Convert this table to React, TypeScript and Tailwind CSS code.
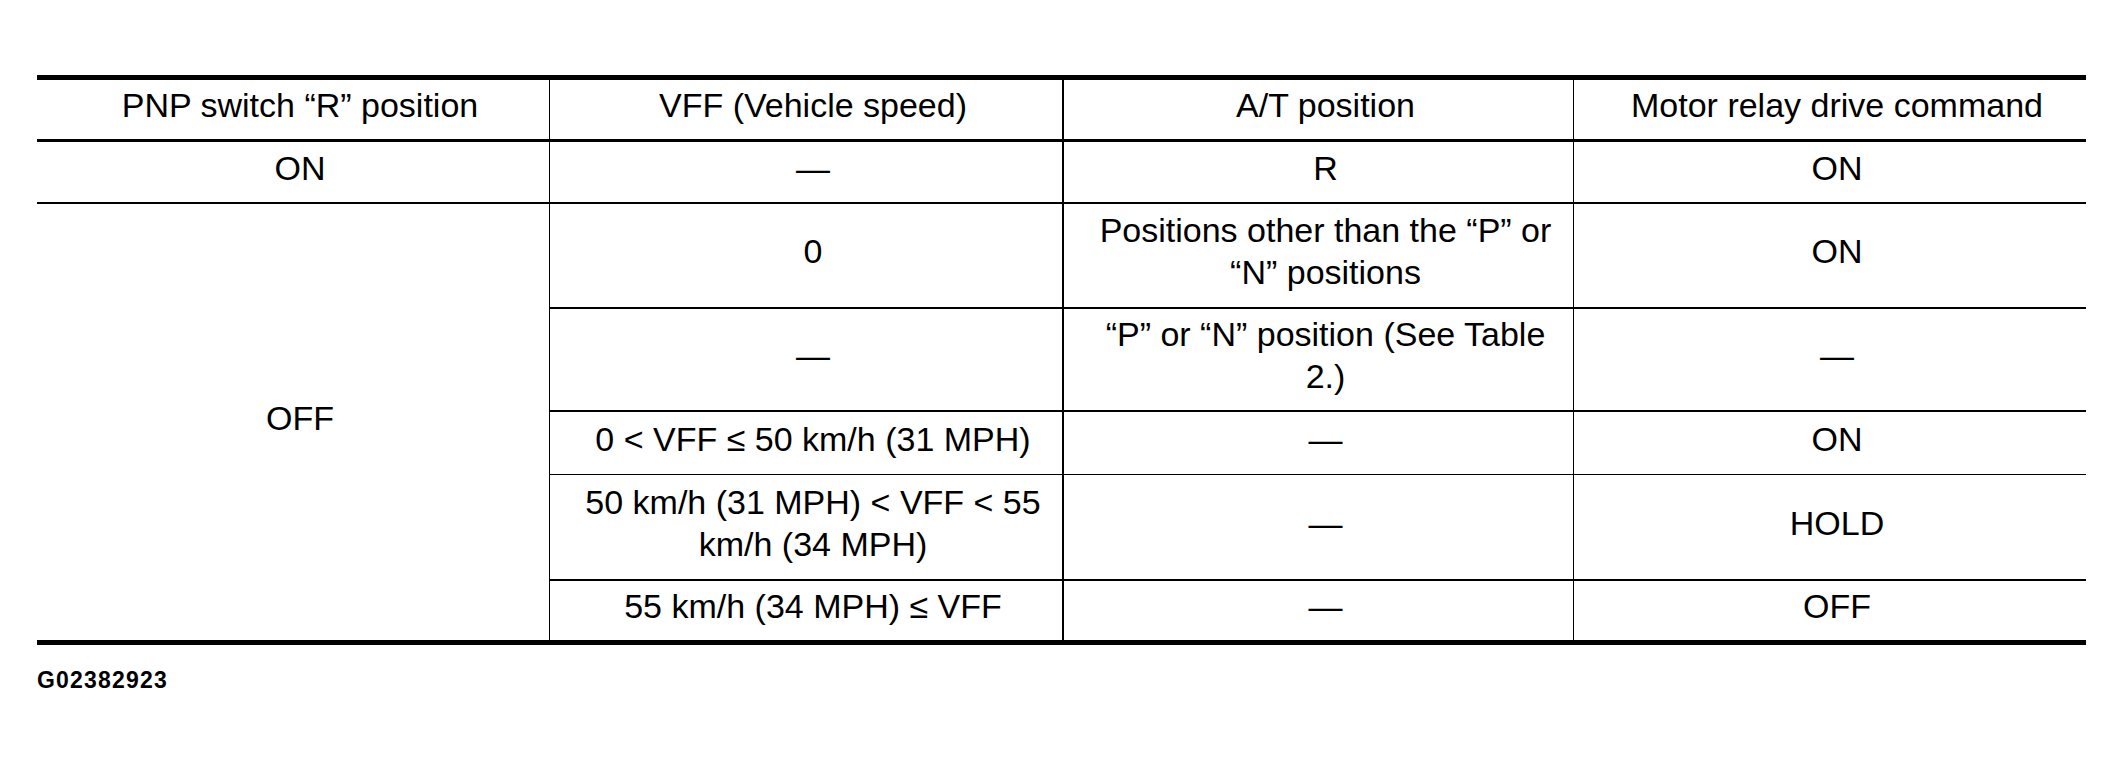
import React from 'react'

const font = { fontFamily: '"Liberation Sans", Arial, sans-serif' }

type CellProps = {
  children?: React.ReactNode
  className?: string
}

function Cell({ children, className = '' }: CellProps) {
  return (
    <div className={`flex items-center justify-center text-center pl-[31px] pr-[17px] pb-[9px] leading-[42px] ${className}`}>
      <div>{children}</div>
    </div>
  )
}

export default function App() {
  return (
    <div className="w-[2124px] h-[764px] bg-white text-black pt-[75px] pl-[37px]" style={font}>
      <div className="w-[2049px] border-t-[5px] border-b-[5px] border-black text-[34px]">
        <div className="grid grid-cols-[512px_513px_511px_513px]">
          {/* header */}
          <Cell className="h-[62px] border-b-[3px] border-black">PNP switch “R” position</Cell>
          <Cell className="h-[62px] border-b-[3px] border-l border-black">VFF (Vehicle speed)</Cell>
          <Cell className="h-[62px] border-b-[3px] border-l-2 border-black">A/T position</Cell>
          <Cell className="h-[62px] border-b-[3px] border-l border-black">Motor relay drive command</Cell>

          {/* PNP ON */}
          <Cell className="h-[62px] border-b-2 border-black">ON</Cell>
          <Cell className="h-[62px] border-b-2 border-l border-black">—</Cell>
          <Cell className="h-[62px] border-b-2 border-l-2 border-black">R</Cell>
          <Cell className="h-[62px] border-b-2 border-l border-black">ON</Cell>

          {/* PNP OFF */}
          <Cell className="row-span-5 border-black">OFF</Cell>
          <Cell className="h-[105px] border-b-2 border-l border-black">0</Cell>
          <Cell className="h-[105px] border-b-2 border-l-2 border-black">
            Positions other than the “P” or “N” positions
          </Cell>
          <Cell className="h-[105px] border-b-2 border-l border-black">ON</Cell>

          <Cell className="h-[103px] border-b-2 border-l border-black">—</Cell>
          <Cell className="h-[103px] border-b-2 border-l-2 border-black">
            “P” or “N” position (See Table 2.)
          </Cell>
          <Cell className="h-[103px] border-b-2 border-l border-black">—</Cell>

          <Cell className="h-[63px] border-b border-l border-black">0 &lt; VFF ≤ 50 km/h (31 MPH)</Cell>
          <Cell className="h-[63px] border-b border-l-2 border-black">—</Cell>
          <Cell className="h-[63px] border-b border-l border-black">ON</Cell>

          <Cell className="h-[106px] border-b-2 border-l border-black">
            50 km/h (31 MPH) &lt; VFF &lt; 55 km/h (34 MPH)
          </Cell>
          <Cell className="h-[106px] border-b-2 border-l-2 border-black">—</Cell>
          <Cell className="h-[106px] border-b-2 border-l border-black">HOLD</Cell>

          <Cell className="h-[59px] border-l border-black">55 km/h (34 MPH) ≤ VFF</Cell>
          <Cell className="h-[59px] border-l-2 border-black">—</Cell>
          <Cell className="h-[59px] border-l border-black">OFF</Cell>
        </div>
      </div>
      <div className="mt-[24px] text-[23px] font-bold tracking-[1.2px] leading-none">G02382923</div>
    </div>
  )
}
